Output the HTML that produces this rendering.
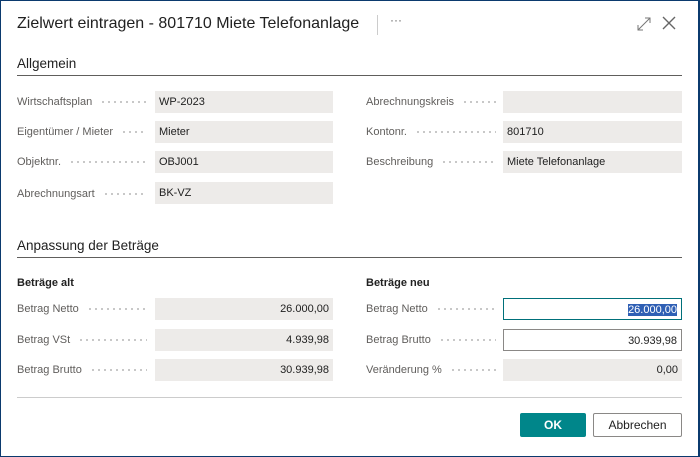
<!DOCTYPE html>
<html><head><style>
*{box-sizing:border-box;margin:0;padding:0}
body{width:700px;height:457px;background:#fff;font-family:"Liberation Sans",sans-serif;position:relative;overflow:hidden;border:1px solid #0b3a6e;border-right:2px solid #0b3a6e}
.a{position:absolute}
.t{left:16px;top:14px;font-size:16px;color:#212121}
.h{font-size:13.5px;color:#212121;left:16px}
.ln{left:16px;width:665px;height:1px;background:#605e5c}
.lb{font-size:11px;color:#605e5c;white-space:nowrap;display:flex;width:130px;height:14px;align-items:center}
.lb i{flex:1;height:2px;margin-left:8px;background-image:radial-gradient(circle,#b5b5b5 0.8px,transparent 1px);background-size:6px 2px;background-repeat:repeat-x}
.f{height:22px;background:#edebe9;font-size:11px;color:#212121;padding:5px 4px;line-height:12px}
.r{text-align:right}
.o{background:#fff;border:1px solid #8a8886}
.sub{font-size:11px;color:#212121;font-weight:bold}
</style></head><body>
<div class="a t">Zielwert eintragen - 801710 Miete Telefonanlage</div>
<div class="a" style="left:376px;top:14px;width:1px;height:20px;background:#ccc"></div>
<div class="a" style="left:389px;top:12px;font-size:12px;color:#666">···</div>
<svg class="a" style="left:635px;top:15px" width="16" height="16"><path d="M2 14L14 2M9 2h5v5M2 9v5h5" stroke="#777" fill="none" stroke-width="1"/></svg>
<svg class="a" style="left:660px;top:14px" width="16" height="16"><path d="M2 2L14 14M14 2L2 14" stroke="#666" fill="none" stroke-width="1.4"/></svg>

<div class="a h" style="top:55px">Allgemein</div>
<div class="a ln" style="top:74px"></div>

<div class="a lb" style="left:16px;top:94px">Wirtschaftsplan<i></i></div>
<div class="a f" style="left:154px;top:90px;width:178px">WP-2023</div>
<div class="a lb" style="left:16px;top:124px">Eigentümer / Mieter<i></i></div>
<div class="a f" style="left:154px;top:120px;width:178px">Mieter</div>
<div class="a lb" style="left:16px;top:154px">Objektnr.<i></i></div>
<div class="a f" style="left:154px;top:150px;width:178px">OBJ001</div>
<div class="a lb" style="left:16px;top:186px">Abrechnungsart<i></i></div>
<div class="a f" style="left:154px;top:181px;width:178px">BK-VZ</div>

<div class="a lb" style="left:365px;top:94px">Abrechnungskreis<i></i></div>
<div class="a f" style="left:502px;top:90px;width:179px"></div>
<div class="a lb" style="left:365px;top:124px">Kontonr.<i></i></div>
<div class="a f" style="left:502px;top:120px;width:179px">801710</div>
<div class="a lb" style="left:365px;top:154px">Beschreibung<i></i></div>
<div class="a f" style="left:502px;top:150px;width:179px">Miete Telefonanlage</div>

<div class="a h" style="top:237px">Anpassung der Beträge</div>
<div class="a ln" style="top:256px"></div>

<div class="a sub" style="left:16px;top:276px">Beträge alt</div>
<div class="a sub" style="left:365px;top:276px">Beträge neu</div>

<div class="a lb" style="left:16px;top:301px">Betrag Netto<i></i></div>
<div class="a f r" style="left:154px;top:297px;width:178px">26.000,00</div>
<div class="a lb" style="left:16px;top:332px">Betrag VSt<i></i></div>
<div class="a f r" style="left:154px;top:328px;width:178px">4.939,98</div>
<div class="a lb" style="left:16px;top:362px">Betrag Brutto<i></i></div>
<div class="a f r" style="left:154px;top:358px;width:178px">30.939,98</div>

<div class="a lb" style="left:365px;top:301px">Betrag Netto<i></i></div>
<div class="a f r o" style="left:502px;top:297px;width:179px;border-color:#00707a"><span style="background:#2f5fb4;color:#fff">26.000,00</span></div>
<div class="a lb" style="left:365px;top:332px">Betrag Brutto<i></i></div>
<div class="a f r o" style="left:502px;top:328px;width:179px">30.939,98</div>
<div class="a lb" style="left:365px;top:362px">Veränderung %<i></i></div>
<div class="a f r" style="left:502px;top:358px;width:179px">0,00</div>

<div class="a" style="left:16px;top:396px;width:665px;height:1px;background:#ccc"></div>
<div class="a" style="left:519px;top:412px;width:66px;height:24px;background:#00868a;color:#fff;font-weight:bold;font-size:12px;text-align:center;line-height:24px;border-radius:2px">OK</div>
<div class="a" style="left:592px;top:412px;width:89px;height:24px;border:1px solid #8a8886;color:#212121;font-size:12px;text-align:center;line-height:22px;border-radius:2px">Abbrechen</div>
</body></html>
